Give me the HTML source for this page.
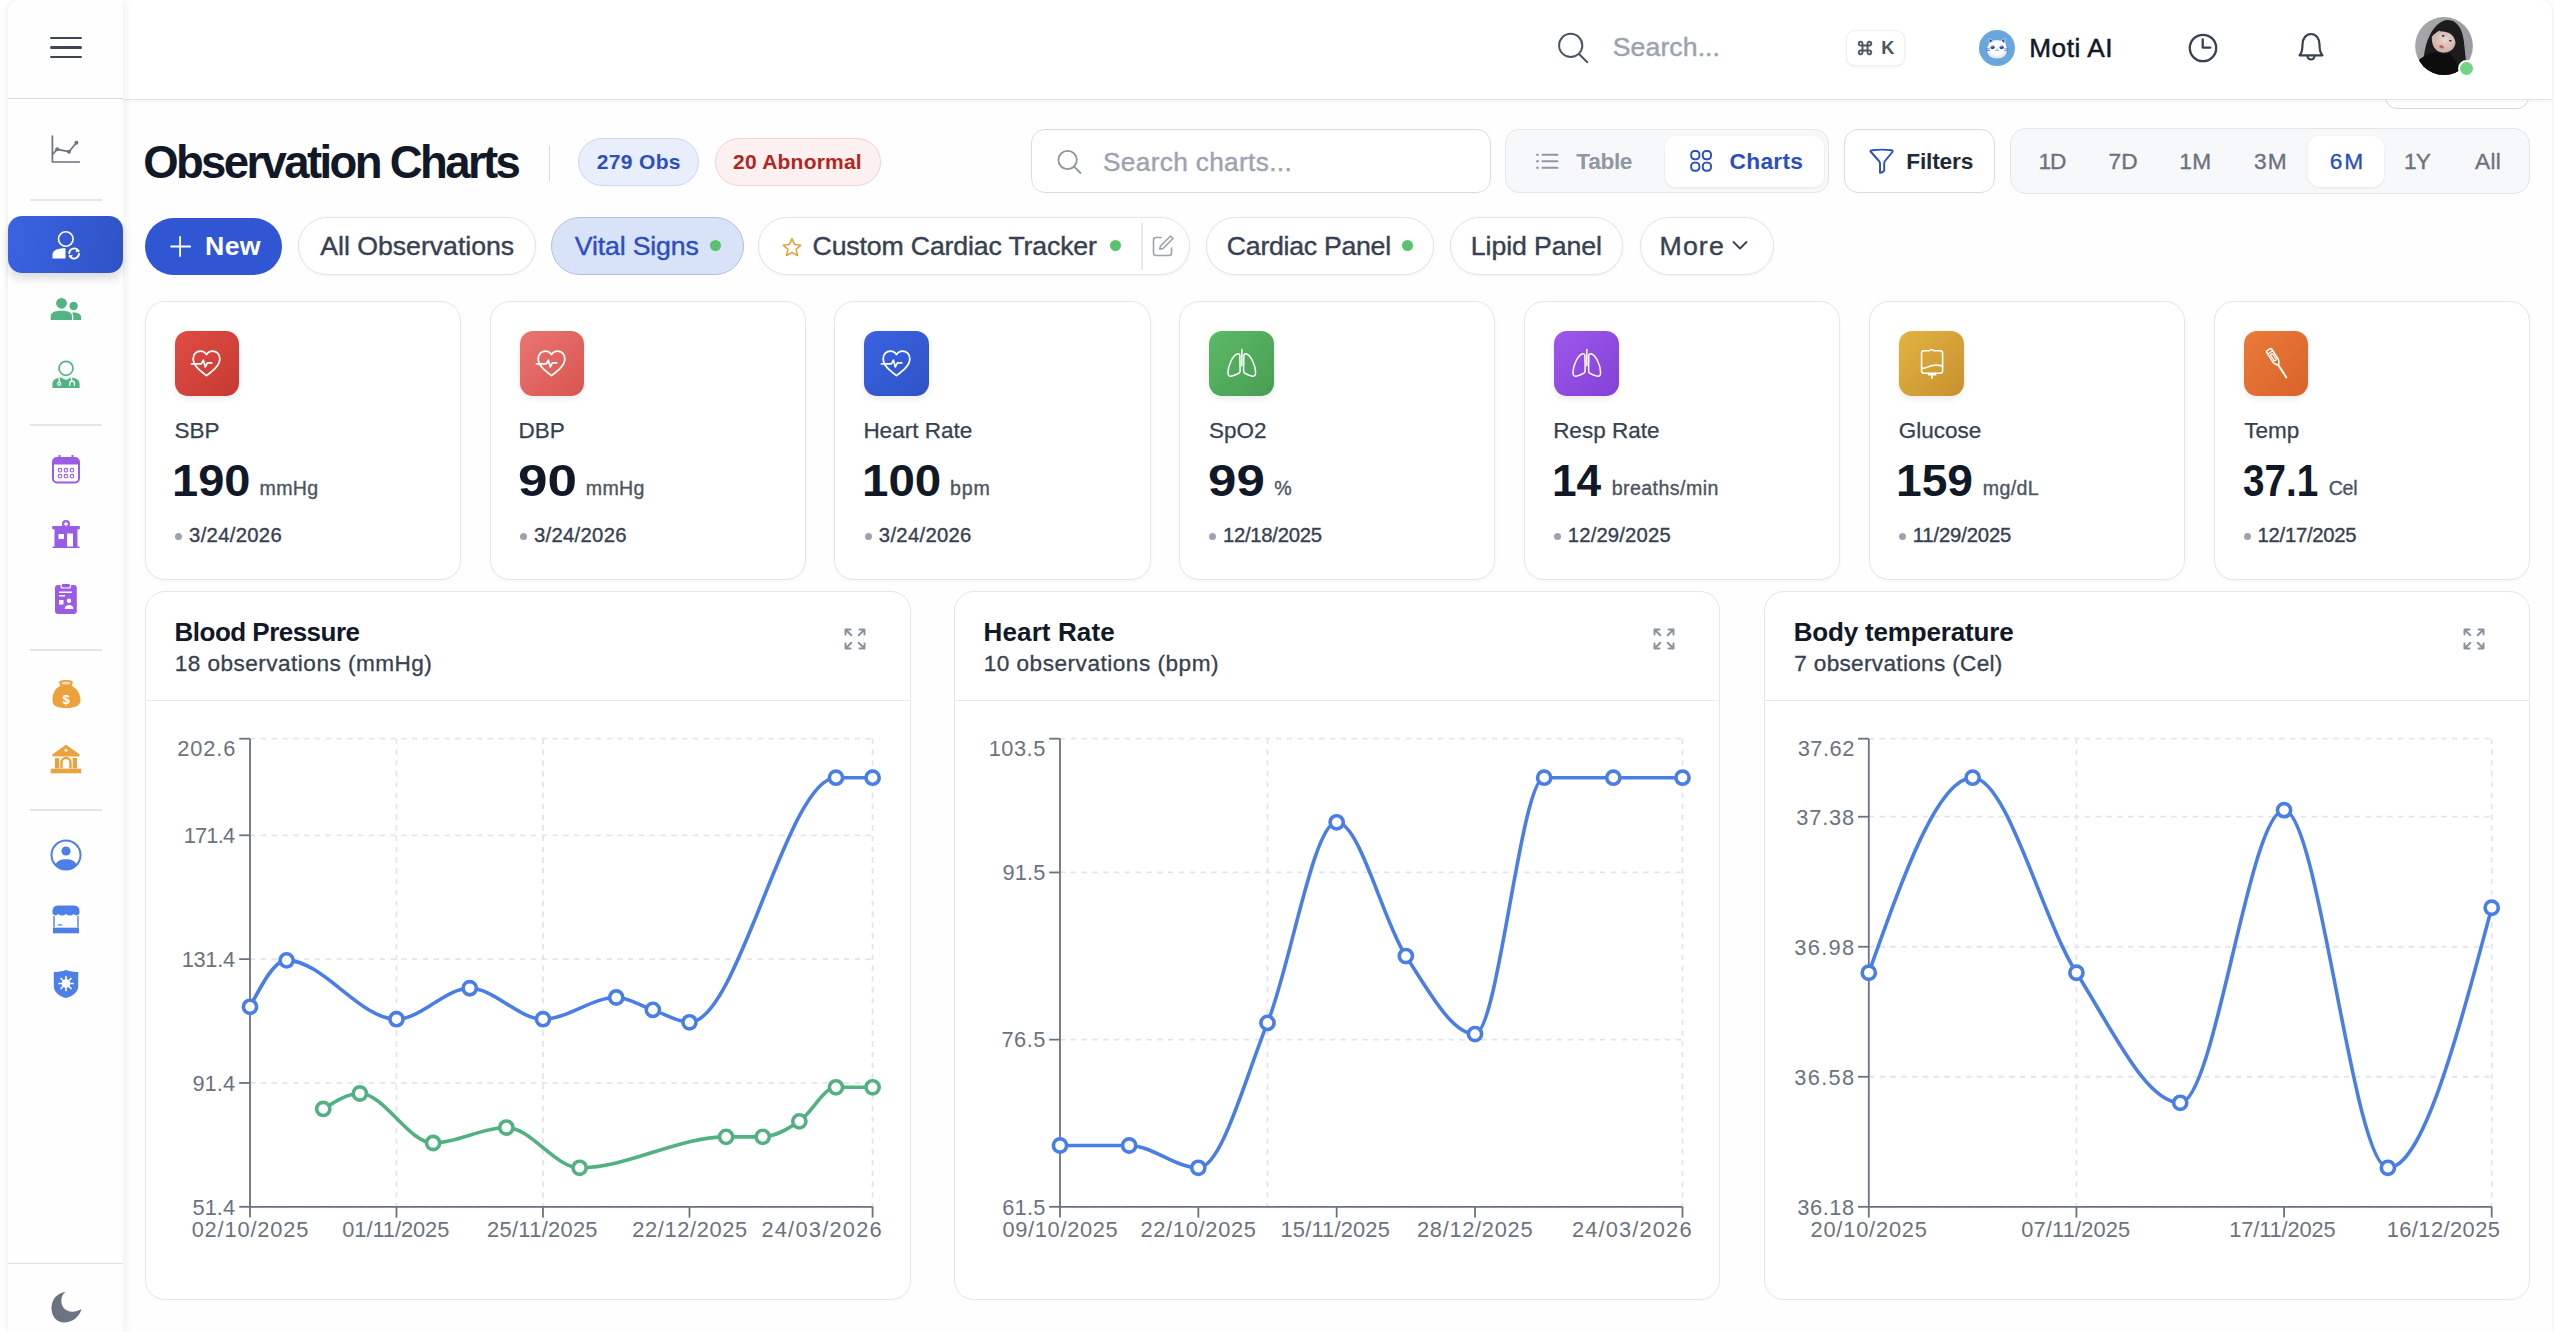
<!DOCTYPE html><html><head><meta charset="utf-8"><title>Observation Charts</title><style>
*{box-sizing:border-box;margin:0;padding:0}
html,body{width:2554px;height:1332px;overflow:hidden;background:#fff;font-family:"Liberation Sans",sans-serif;position:relative}
.abs{position:absolute}
.t{position:absolute;white-space:nowrap;line-height:1}
</style></head><body><div class="abs" style="left:8.00px;top:0.00px;width:2544.00px;height:1332.00px;background:#fefeff;border-radius:12px 12px 0 0;box-shadow:0 0 7px rgba(0,0,0,0.075)"></div><div class="abs" style="left:2385.00px;top:60.00px;width:144.00px;height:49.30px;background:#fff;border:1.5px solid #d3d6dc;border-radius:12px"></div><div class="abs" style="left:123.00px;top:0.00px;width:2429.00px;height:100.20px;background:#fff;border-bottom:1.2px solid #dfe2e7;border-radius:0 12px 0 0;box-shadow:0 2px 5px rgba(0,0,0,0.035)"></div><div class="abs" style="left:8.00px;top:0.00px;width:115.00px;height:1332.00px;background:#fefeff;border-radius:12px 0 0 0;box-shadow:3px 0 10px rgba(0,0,0,0.055)"></div><div class="abs" style="left:8.00px;top:97.90px;width:115.00px;height:1.20px;background:#d3d7de"></div><div class="abs" style="left:49.50px;top:36.60px;width:32.30px;height:2.80px;background:#3f4756;border-radius:1.5px"></div><div class="abs" style="left:49.50px;top:46.10px;width:32.30px;height:2.80px;background:#3f4756;border-radius:1.5px"></div><div class="abs" style="left:49.50px;top:55.60px;width:32.30px;height:2.80px;background:#3f4756;border-radius:1.5px"></div><div class="abs" style="left:30.00px;top:199.00px;width:72.00px;height:1.80px;background:#e3e5ea"></div><div class="abs" style="left:30.00px;top:424.00px;width:72.00px;height:1.80px;background:#e3e5ea"></div><div class="abs" style="left:30.00px;top:649.00px;width:72.00px;height:1.80px;background:#e3e5ea"></div><div class="abs" style="left:30.00px;top:809.00px;width:72.00px;height:1.80px;background:#e3e5ea"></div><div class="abs" style="left:8.00px;top:1262.50px;width:115.00px;height:1.80px;background:#dde0e6"></div><svg class="abs" style="left:48.00px;top:132.00px;" width="36.00" height="34.00" viewBox="0 0 36 34" fill="none"><path d="M4.4 4 V30 H31.3" stroke="#6b7280" stroke-width="1.7" stroke-linecap="round" stroke-linejoin="round"/><path d="M4.6 22.5 L9.2 17.3 L21 19.7 L28.4 10.8" stroke="#6b7280" stroke-width="1.7" stroke-linejoin="round"/><circle cx="9.2" cy="17.3" r="2" fill="#6b7280"/><circle cx="21" cy="19.7" r="2" fill="#6b7280"/><circle cx="28.4" cy="10.8" r="2" fill="#6b7280"/></svg><div class="abs" style="left:8.00px;top:216.00px;width:115.00px;height:56.50px;background:linear-gradient(100deg,#3a63e2,#2f53c6);border-radius:14px;box-shadow:0 6px 10px rgba(0,0,0,0.13)"></div><svg class="abs" style="left:48.00px;top:226.00px;" width="36.00" height="36.00" viewBox="0 0 36 36" fill="none"><circle cx="17.8" cy="13" r="7.3" stroke="#fff" stroke-width="1.6"/><path d="M4.5 32.5 V28.5 C4.5 25 8 22.3 17.5 22.3 V32.5 Z" fill="#fff"/><path d="M21.3 27.3 a5 5 0 0 1 9.3 -2.4 M30.9 27.7 a5 5 0 0 1 -9.3 2.4" stroke="#fff" stroke-width="1.9" stroke-linecap="round"/><path d="M28.6 22.6 l2.6 2.8 l-3.6 0.8 Z M23.6 32.4 l-2.6 -2.8 l3.6 -0.8 Z" fill="#fff"/></svg><svg class="abs" style="left:48.00px;top:294.00px;" width="36.00" height="30.00" viewBox="0 0 36 30" fill="none"><circle cx="25.6" cy="12" r="4.2" fill="#52b383"/><path d="M21 26 V21.5 C21 19.5 22.5 18.5 25.5 18.5 C30 18.5 33.2 20 33.2 23.5 V26 Z" fill="#52b383"/><path d="M1.5 26.8 V22.5 C1.5 18 5.5 15.5 13.5 15.5 C21.5 15.5 25.3 18 25.3 22.5 V26.8 Z" fill="#fff"/><circle cx="13.5" cy="9.3" r="6.6" fill="#fff"/><circle cx="13.5" cy="9.3" r="5.4" fill="#52b383"/><path d="M2.7 26 V22.5 C2.7 18.8 6 16.7 13.5 16.7 C21 16.7 24 18.8 24 22.5 V26 Z" fill="#52b383"/></svg><svg class="abs" style="left:48.00px;top:356.00px;" width="36.00" height="36.00" viewBox="0 0 36 36" fill="none"><circle cx="18" cy="12.3" r="7" stroke="#52b383" stroke-width="1.7"/><path d="M4.4 32 V28 C4.4 24.5 7 22 13 21.5 L18 24 L23 21.5 C29 22 31.6 24.5 31.6 28 V32 Z" fill="#52b383"/><path d="M11.2 22 V26.5" stroke="#fff" stroke-width="1.3"/><circle cx="11.2" cy="27.8" r="1.5" stroke="#fff" stroke-width="1.2"/><path d="M23.5 22 V24.5 M21.8 29.5 V27.3 a2.3 2.3 0 0 1 4.6 0 V29.5" stroke="#fff" stroke-width="1.3" stroke-linecap="round"/></svg><svg class="abs" style="left:48.00px;top:451.00px;" width="36.00" height="36.00" viewBox="0 0 36 36" fill="none"><rect x="5" y="7" width="26" height="24.5" rx="4" stroke="#9a5ce6" stroke-width="2"/><path d="M5 11 a4 4 0 0 1 4 -4 h18 a4 4 0 0 1 4 4 v2.5 h-26 Z" fill="#9a5ce6"/><path d="M11.5 4 v5 M24.5 4 v5" stroke="#9a5ce6" stroke-width="2"/><circle cx="12" cy="19.2" r="1.8" stroke="#9a5ce6" stroke-width="1.1"/><circle cx="12" cy="25.2" r="1.8" stroke="#9a5ce6" stroke-width="1.1"/><circle cx="18" cy="19.2" r="1.8" stroke="#9a5ce6" stroke-width="1.1"/><circle cx="18" cy="25.2" r="1.8" stroke="#9a5ce6" stroke-width="1.1"/><circle cx="24" cy="19.2" r="1.8" stroke="#9a5ce6" stroke-width="1.1"/><circle cx="24" cy="25.2" r="1.8" stroke="#9a5ce6" stroke-width="1.1"/></svg><svg class="abs" style="left:48.00px;top:516.00px;" width="36.00" height="36.00" viewBox="0 0 36 36" fill="none"><path d="M4.3 10 H31.8 V13.3 H29.5 V30.5 H31.5 V32 H4.5 V30.5 H6.5 V13.3 H4.3 Z" fill="#9a5ce6"/><circle cx="18" cy="8" r="4" fill="#9a5ce6"/><path d="M18 5.8 v4.4 M15.8 8 h4.4" stroke="#fff" stroke-width="1.3"/><rect x="10.5" y="18" width="5.5" height="5" fill="#fff"/><rect x="19" y="17.5" width="6" height="13" fill="#fff"/></svg><svg class="abs" style="left:48.00px;top:580.00px;" width="36.00" height="38.00" viewBox="0 0 36 38" fill="none"><rect x="7" y="5" width="21.8" height="29" rx="3" fill="#9a5ce6"/><rect x="13" y="3.5" width="9.5" height="4.5" rx="2" fill="#9a5ce6" stroke="#fff" stroke-width="1.2"/><path d="M11 12.3 h13 M11 15.8 h6" stroke="#fff" stroke-width="1.4"/><rect x="11" y="20" width="4.5" height="4.5" fill="#fff"/><circle cx="21" cy="20.7" r="2.2" fill="#fff"/><path d="M16.8 29 c0 -3 2 -4 4.3 -4 c2.3 0 4.3 1 4.3 4 Z" fill="#fff"/></svg><svg class="abs" style="left:48.00px;top:676.00px;" width="36.00" height="36.00" viewBox="0 0 36 36" fill="none"><path d="M12.5 9.5 C9 5 13 4 18 4 C23 4 27 5 23.5 9.5 C30 13 32.5 19 32.5 24 C32.5 30 27 32 18 32 C9 32 4.5 30 4.5 24 C4.5 19 6 13 12.5 9.5 Z" fill="#eba23c"/><ellipse cx="18" cy="7" rx="4.5" ry="1.6" fill="#fff" opacity="0.6"/><text x="18" y="27.5" text-anchor="middle" font-family="Liberation Sans" font-weight="700" font-size="13" fill="#fff">$</text></svg><svg class="abs" style="left:48.00px;top:741.00px;" width="36.00" height="36.00" viewBox="0 0 36 36" fill="none"><path d="M18 3.7 L31 13 H5 Z" fill="#eba23c"/><rect x="4.5" y="13" width="27" height="2.5" fill="#eba23c"/><rect x="7" y="17" width="4.3" height="10.5" fill="#eba23c"/><rect x="24.7" y="17" width="4.3" height="10.5" fill="#eba23c"/><path d="M13.5 27.5 V21.5 a4.5 4.5 0 0 1 9 0 V27.5" stroke="#eba23c" stroke-width="2.4"/><rect x="2.8" y="27.7" width="30.4" height="4.6" fill="#eba23c"/><path d="M18 7.5 v3.6 M16.2 9.3 h3.6" stroke="#fff" stroke-width="1.1"/></svg><svg class="abs" style="left:48.00px;top:836.00px;" width="36.00" height="36.00" viewBox="0 0 36 36" fill="none"><circle cx="18" cy="19" r="14.5" stroke="#4c7fe7" stroke-width="2"/><circle cx="18" cy="15" r="4.6" fill="#4c7fe7"/><path d="M7.5 28.5 C10 24.3 13 23.3 18 23.3 C23 23.3 26 24.3 28.5 28.5 C25.5 31.8 22 33.5 18 33.5 C14 33.5 10.5 31.8 7.5 28.5 Z" fill="#4c7fe7"/></svg><svg class="abs" style="left:48.00px;top:901.00px;" width="36.00" height="36.00" viewBox="0 0 36 36" fill="none"><path d="M4.5 10.5 Q4.5 4.5 10 4.5 H26 Q31.5 4.5 31.5 10.5 V12.5 Q29 16 25.7 13 Q22 16 18 13 Q14 16 10.3 13 Q7 16 4.5 12.5 Z" fill="#4c7fe7"/><path d="M6 15 V26.5 M30 15 V26.5" stroke="#4c7fe7" stroke-width="1.4"/><path d="M9 24.5 q3 -3 6 0 Z" fill="#4c7fe7"/><rect x="5" y="26.7" width="26" height="5.6" fill="#4c7fe7"/></svg><svg class="abs" style="left:48.00px;top:966.00px;" width="36.00" height="36.00" viewBox="0 0 36 36" fill="none"><path d="M18 4 C22 5.5 26 6 30.2 6 V20 C30.2 26 25 30 18 32 C11 30 5.8 26 5.8 20 V6 C10 6 14 5.5 18 4 Z" fill="#4c7fe7"/><circle cx="18" cy="17.5" r="4.3" fill="#fff"/><path d="M18 10.5 v14 M11 17.5 h14 M13 12.5 l10 10 M23 12.5 l-10 10" stroke="#fff" stroke-width="1.7" stroke-linecap="round"/></svg><svg class="abs" style="left:48.00px;top:1288.00px;" width="36.00" height="38.00" viewBox="0 0 36 38" fill="none"><path d="M17.5 4 C11 9 12.5 19.5 19 22.5 C24 25 29 23.5 33.6 21 C31 30 23 35 15 34.5 C6.5 33.5 3.5 26 3.5 20 C3.5 11 10 4.5 17.5 4 Z" fill="#6b7280"/></svg><svg class="abs" style="left:1552.00px;top:28.00px;" width="40.00" height="40.00" viewBox="0 0 40 40" fill="none"><circle cx="18.7" cy="17.4" r="11.6" stroke="#4b5563" stroke-width="2"/><path d="M27 26 L35.3 34.2" stroke="#4b5563" stroke-width="2" stroke-linecap="round"/></svg><div class="t" style="left:1612.79px;top:34.48px;font-size:26.60px;color:#9ca3af;letter-spacing:0.098px;-webkit-text-stroke:0.45px #9ca3af;">Search...</div><div class="abs" style="left:1846.00px;top:29.60px;width:59.00px;height:36.40px;background:#fff;border:1px solid #eef0f3;border-radius:9px;box-shadow:0 1px 3px rgba(0,0,0,0.06)"></div><svg class="abs" style="left:1857.00px;top:40.00px;" width="16.00" height="16.00" viewBox="0 0 16 16" fill="none"><path d="M5.5 5.5 H10.5 V10.5 H5.5 Z M5.5 5.5 V3.8 A1.9 1.9 0 1 0 3.8 5.5 H5.5 M10.5 5.5 H12.2 A1.9 1.9 0 1 0 10.5 3.8 V5.5 M10.5 10.5 V12.2 A1.9 1.9 0 1 0 12.2 10.5 H10.5 M5.5 10.5 H3.8 A1.9 1.9 0 1 0 5.5 12.2 V10.5" stroke="#4b5563" stroke-width="1.9"/></svg><div class="t" style="left:1881.28px;top:38.51px;font-size:18.30px;color:#4b5563;font-weight:700;">K</div><svg class="abs" style="left:1979.00px;top:30.00px;" width="36.00" height="36.00" viewBox="0 0 36 36" fill="none"><defs><radialGradient id="cath" cx="0.5" cy="0.4" r="0.6"><stop offset="0.6" stop-color="#fff"/><stop offset="1" stop-color="#d5e2f3"/></radialGradient></defs><circle cx="18" cy="18" r="18" fill="#68a7de"/><path d="M9.5 14 L9.2 7.2 L14.5 10.3 Q18 9.3 21.5 10.3 L26.9 7.2 L26.8 14 Q28.5 17 28.3 21 Q27.5 28.9 18 28.9 Q8.5 28.9 7.7 21 Q7.5 17 9.5 14 Z" fill="url(#cath)" stroke="#4f86c9" stroke-width="0.5"/><path d="M10.3 8.8 L10.6 13 L13.6 10.8 Z M25.7 8.8 L25.4 13 L22.4 10.8 Z" fill="#2d4aa8"/><ellipse cx="13.6" cy="17.3" rx="2.1" ry="1.9" fill="#2d4aa8"/><ellipse cx="22.6" cy="17.3" rx="2.1" ry="1.9" fill="#2d4aa8"/><circle cx="13" cy="16.6" r="0.6" fill="#fff"/><circle cx="22" cy="16.6" r="0.6" fill="#fff"/><path d="M17.2 18.6 h1.6 l-0.8 0.9 Z" fill="#6d86c6"/><path d="M16.3 20.3 h3.4 M6.8 18.8 h4.2 M7.2 20.5 h4 M25 18.8 h4.2 M24.8 20.5 h4" stroke="#3d5bb3" stroke-width="0.6"/><circle cx="13.5" cy="11.5" r="0.5" fill="#8aa3d8"/></svg><div class="t" style="left:2029.15px;top:34.82px;font-size:26.20px;color:#111827;letter-spacing:0.556px;-webkit-text-stroke:0.5px #111827;">Moti AI</div><svg class="abs" style="left:2186.00px;top:31.00px;" width="34.00" height="34.00" viewBox="0 0 34 34" fill="none"><circle cx="17" cy="17" r="13.2" stroke="#374151" stroke-width="2.3"/><path d="M16.7 8.3 V16.6 H24.3" stroke="#374151" stroke-width="2.3" stroke-linecap="round" stroke-linejoin="round"/></svg><svg class="abs" style="left:2293.00px;top:30.00px;" width="36.00" height="36.00" viewBox="0 0 36 36" fill="none"><path d="M6.5 25.3 C9 23 9.5 20.5 9.5 14.5 C9.5 8.5 13 4 18 4 C23 4 26.5 8.5 26.5 14.5 C26.5 20.5 27 23 29.5 25.3 Z" stroke="#374151" stroke-width="2.2" stroke-linejoin="round"/><path d="M14.5 26 a3.5 3.5 0 0 0 7 0" stroke="#374151" stroke-width="2.2"/></svg><svg class="abs" style="left:2415.00px;top:17.00px;" width="58.00" height="58.00" viewBox="0 0 58 58" fill="none"><defs><clipPath id="av"><circle cx="29" cy="29" r="28.9"/></clipPath><linearGradient id="avbg" x1="0" y1="0" x2="1" y2="0.4"><stop offset="0" stop-color="#a9a9ab"/><stop offset="1" stop-color="#989aa0"/></linearGradient><radialGradient id="avf" cx="0.55" cy="0.45" r="0.6"><stop offset="0" stop-color="#e8d6cf"/><stop offset="1" stop-color="#c9ada3"/></radialGradient></defs><g clip-path="url(#av)"><rect width="58" height="58" fill="url(#avbg)"/><path d="M7 58 C8 42 10 28 14 20 C18 10 26 3 33 3 C42 3 47 12 48.5 22 C50 32 50.5 44 53 58 Z" fill="#1d1b1c"/><path d="M17 19.5 C22 13.5 28 12 32 13 C38 14.5 41 19.5 40.5 25.5 C40 31 36 35 30 35.6 C25 36 20.5 33.5 18.3 29 C17 25.5 16.5 22 17 19.5 Z" fill="url(#avf)"/><path d="M25 12.5 C33 9.5 41 14 43 23 L40.6 25 C39 17.5 33.5 14.2 25 14.2 Z" fill="#1d1b1c"/><path d="M0 58 L0 47 C5 41 12 37 19.5 34.8 C25 36.5 30 37.5 34.5 36.5 C39 41 44 49 47 58 Z" fill="#0e0d0e"/><ellipse cx="28.2" cy="18.9" rx="1.4" ry="0.8" fill="#2a2222"/><ellipse cx="35.3" cy="23.7" rx="1.4" ry="0.8" fill="#2a2222"/><ellipse cx="26.6" cy="29.8" rx="2.5" ry="1.5" transform="rotate(20 26.6 29.8)" fill="#c4605a"/></g></svg><div class="abs" style="left:2458.40px;top:60.40px;width:17.00px;height:17.00px;background:#72d382;border:2.6px solid #fff;border-radius:50%"></div><div class="t" style="left:143.13px;top:139.88px;font-size:45.50px;color:#111827;font-weight:700;letter-spacing:-2.619px;">Observation Charts</div><div class="abs" style="left:548.50px;top:144.50px;width:1.20px;height:36.00px;background:#d8dbe0"></div><div class="abs" style="left:578.00px;top:138.00px;width:121.00px;height:47.60px;background:#e8eefb;border:1.2px solid #cbd7f4;border-radius:24px"></div><div class="t" style="left:596.87px;top:151.42px;font-size:21.00px;color:#2b4fc1;font-weight:700;letter-spacing:0.313px;">279 Obs</div><div class="abs" style="left:714.50px;top:138.00px;width:166.50px;height:47.60px;background:#fcf0f0;border:1.2px solid #f4d2d0;border-radius:24px"></div><div class="t" style="left:733.07px;top:151.42px;font-size:21.00px;color:#b3261e;font-weight:700;letter-spacing:0.222px;">20 Abnormal</div><div class="abs" style="left:1030.50px;top:129.30px;width:460.00px;height:64.00px;background:#fff;border:1.5px solid #d9dce1;border-radius:14px"></div><svg class="abs" style="left:1054.00px;top:146.00px;" width="30.00" height="30.00" viewBox="0 0 30 30" fill="none"><circle cx="13.6" cy="14" r="9.2" stroke="#8d94a0" stroke-width="1.8"/><path d="M20.3 20.8 L26.5 27" stroke="#8d94a0" stroke-width="1.8" stroke-linecap="round"/></svg><div class="t" style="left:1103.01px;top:148.82px;font-size:26.20px;color:#9ca3af;letter-spacing:0.354px;-webkit-text-stroke:0.4px #9ca3af;">Search charts...</div><div class="abs" style="left:1505.00px;top:129.30px;width:324.00px;height:64.00px;background:#f7f8fa;border:1.5px solid #e3e5e9;border-radius:14px"></div><div class="abs" style="left:1665.00px;top:136.30px;width:159.00px;height:50.50px;background:#fff;border-radius:11px;box-shadow:0 1px 3px rgba(0,0,0,0.08)"></div><svg class="abs" style="left:1532.00px;top:148.00px;" width="30.00" height="28.00" viewBox="0 0 30 28" fill="none"><path d="M10.5 6.8 H25.5 M10.5 13.3 H25.5 M10.5 19.8 H25.5" stroke="#9097a3" stroke-width="1.9" stroke-linecap="round"/><circle cx="5.5" cy="6.8" r="1.3" fill="#9097a3"/><circle cx="5.5" cy="13.3" r="1.3" fill="#9097a3"/><circle cx="5.5" cy="19.8" r="1.3" fill="#9097a3"/></svg><div class="t" style="left:1576.35px;top:149.58px;font-size:22.70px;color:#9097a3;font-weight:700;letter-spacing:-0.364px;">Table</div><svg class="abs" style="left:1688.00px;top:148.00px;" width="28.00" height="28.00" viewBox="0 0 28 28" fill="none"><rect x="3.2" y="3" width="8.2" height="8.2" rx="3.3" stroke="#2b4fc1" stroke-width="1.9"/><rect x="14.8" y="3" width="8.2" height="8.2" rx="3.3" stroke="#2b4fc1" stroke-width="1.9"/><rect x="3.2" y="14.6" width="8.2" height="8.2" rx="3.3" stroke="#2b4fc1" stroke-width="1.9"/><rect x="14.8" y="14.6" width="8.2" height="8.2" rx="3.3" stroke="#2b4fc1" stroke-width="1.9"/></svg><div class="t" style="left:1729.57px;top:149.58px;font-size:22.70px;color:#2b4fc1;font-weight:700;letter-spacing:0.292px;">Charts</div><div class="abs" style="left:1844.00px;top:129.30px;width:151.00px;height:64.00px;background:#fff;border:1.5px solid #d9dce1;border-radius:14px"></div><svg class="abs" style="left:1866.00px;top:146.00px;" width="30.00" height="30.00" viewBox="0 0 30 30" fill="none"><path d="M5 6 C4 5 4.5 4.2 6 4.2 C12 3.5 20 3.5 25.5 4.2 C27 4.4 27 5.3 26 6.5 L19 15 C18.4 15.7 18.2 16.5 18.2 17.5 V24 C18.2 25 17.5 25.8 15.5 26.5 L14 26.8 V17.5 C14 16.5 13.6 15.8 13 15 Z" stroke="#2b4fc1" stroke-width="1.9" stroke-linejoin="round"/></svg><div class="t" style="left:1906.18px;top:149.58px;font-size:22.70px;color:#1f2937;font-weight:700;letter-spacing:-0.145px;">Filters</div><div class="abs" style="left:2010.00px;top:128.40px;width:520.00px;height:66.00px;background:#f7f8fa;border:1.5px solid #e3e5e9;border-radius:16px"></div><div class="abs" style="left:2308.00px;top:136.00px;width:75.50px;height:50.60px;background:#fff;border-radius:12px;box-shadow:0 1px 3px rgba(0,0,0,0.08)"></div><div class="t" style="left:2038.51px;top:149.58px;font-size:22.70px;color:#6b7280;letter-spacing:-1.082px;-webkit-text-stroke:0.35px #6b7280;">1D</div><div class="t" style="left:2108.42px;top:149.58px;font-size:22.70px;color:#6b7280;letter-spacing:0.259px;-webkit-text-stroke:0.35px #6b7280;">7D</div><div class="t" style="left:2179.34px;top:149.58px;font-size:22.70px;color:#6b7280;letter-spacing:0.214px;-webkit-text-stroke:0.35px #6b7280;">1M</div><div class="t" style="left:2253.93px;top:149.58px;font-size:22.70px;color:#6b7280;letter-spacing:1.196px;-webkit-text-stroke:0.35px #6b7280;">3M</div><div class="t" style="left:2329.82px;top:149.58px;font-size:22.70px;color:#2b4fc1;letter-spacing:1.729px;-webkit-text-stroke:0.35px #2b4fc1;">6M</div><div class="t" style="left:2403.96px;top:149.58px;font-size:22.70px;color:#6b7280;letter-spacing:-0.922px;-webkit-text-stroke:0.35px #6b7280;">1Y</div><div class="t" style="left:2475.10px;top:149.58px;font-size:22.70px;color:#6b7280;letter-spacing:0.221px;-webkit-text-stroke:0.35px #6b7280;">All</div><div class="abs" style="left:145.00px;top:218.00px;width:137.00px;height:57.00px;background:#3056d3;border-radius:29px"></div><svg class="abs" style="left:168.00px;top:234.00px;" width="24.00" height="24.00" viewBox="0 0 24 24" fill="none"><path d="M12.1 2.9 V22 M3 12.5 H22.2" stroke="#fff" stroke-width="1.8" stroke-linecap="round"/></svg><div class="t" style="left:205.01px;top:232.80px;font-size:26.70px;color:#fff;font-weight:700;letter-spacing:0.367px;">New</div><div class="abs" style="left:297.70px;top:217.40px;width:238.30px;height:58.00px;background:#fff;border:1.5px solid #e2e4e8;border-radius:29px;box-shadow:0 1px 3px rgba(0,0,0,0.05)"></div><div class="t" style="left:320.25px;top:232.80px;font-size:26.70px;color:#374151;letter-spacing:-0.025px;-webkit-text-stroke:0.4px #374151;">All Observations</div><div class="abs" style="left:551.00px;top:217.40px;width:192.60px;height:58.00px;background:#d9e3f8;border:1.5px solid #a9c0f0;border-radius:29px;"></div><div class="t" style="left:574.78px;top:232.80px;font-size:26.70px;color:#2b4fc1;letter-spacing:-0.156px;-webkit-text-stroke:0.4px #2b4fc1;">Vital Signs</div><div class="abs" style="left:710.20px;top:240.40px;width:11.00px;height:11.00px;background:#5cc16e;border-radius:50%"></div><div class="abs" style="left:758.00px;top:217.40px;width:432.00px;height:58.00px;background:#fff;border:1.5px solid #e2e4e8;border-radius:29px;box-shadow:0 1px 3px rgba(0,0,0,0.05)"></div><svg class="abs" style="left:780.00px;top:235.50px;" width="24.00" height="24.00" viewBox="0 0 24 24" fill="none"><path d="M12 2.6 L14.6 8.5 L20.8 9.1 L16.1 13.3 L17.5 19.6 L12 16.3 L6.5 19.6 L7.9 13.3 L3.2 9.1 L9.4 8.5 Z" stroke="#e79a2a" stroke-width="1.45" stroke-linejoin="round"/></svg><div class="t" style="left:812.54px;top:232.80px;font-size:26.70px;color:#374151;letter-spacing:-0.158px;-webkit-text-stroke:0.4px #374151;">Custom Cardiac Tracker</div><div class="abs" style="left:1109.50px;top:240.40px;width:11.00px;height:11.00px;background:#5cc16e;border-radius:50%"></div><div class="abs" style="left:1141.30px;top:223.00px;width:1.50px;height:46.60px;background:#e5e7eb"></div><svg class="abs" style="left:1150.00px;top:233.00px;" width="26.00" height="26.00" viewBox="0 0 26 26" fill="none"><path d="M11 4.5 H6 Q3.5 4.5 3.5 7 V20 Q3.5 22.5 6 22.5 H19 Q21.5 22.5 21.5 20 V15" stroke="#9ca3af" stroke-width="1.6" stroke-linecap="round"/><path d="M20.5 3 L23 5.5 L13 15.5 L9.8 16.2 L10.5 13 Z" stroke="#9ca3af" stroke-width="1.6" stroke-linejoin="round"/></svg><div class="abs" style="left:1205.50px;top:217.40px;width:228.50px;height:58.00px;background:#fff;border:1.5px solid #e2e4e8;border-radius:29px;box-shadow:0 1px 3px rgba(0,0,0,0.05)"></div><div class="t" style="left:1226.84px;top:232.80px;font-size:26.70px;color:#374151;letter-spacing:-0.281px;-webkit-text-stroke:0.4px #374151;">Cardiac Panel</div><div class="abs" style="left:1401.60px;top:240.40px;width:11.00px;height:11.00px;background:#5cc16e;border-radius:50%"></div><div class="abs" style="left:1449.60px;top:217.40px;width:173.40px;height:58.00px;background:#fff;border:1.5px solid #e2e4e8;border-radius:29px;box-shadow:0 1px 3px rgba(0,0,0,0.05)"></div><div class="t" style="left:1470.81px;top:232.80px;font-size:26.70px;color:#374151;letter-spacing:-0.084px;-webkit-text-stroke:0.4px #374151;">Lipid Panel</div><div class="abs" style="left:1639.50px;top:217.40px;width:134.00px;height:58.00px;background:#fff;border:1.5px solid #e2e4e8;border-radius:29px;box-shadow:0 1px 3px rgba(0,0,0,0.05)"></div><div class="t" style="left:1659.51px;top:232.80px;font-size:26.70px;color:#374151;letter-spacing:1.148px;-webkit-text-stroke:0.4px #374151;">More</div><svg class="abs" style="left:1731.00px;top:238.00px;" width="18.00" height="14.00" viewBox="0 0 18 14" fill="none"><path d="M2.5 4 L9 10.5 L15.5 4" stroke="#374151" stroke-width="1.8" stroke-linecap="round" stroke-linejoin="round"/></svg><div class="abs" style="left:144.65px;top:301.40px;width:316.20px;height:278.60px;background:#fff;border:1.5px solid #e4e6ea;border-radius:20px;box-shadow:0 1px 4px rgba(0,0,0,0.03)"></div><div class="abs" style="left:174.65px;top:331.00px;width:64.50px;height:64.80px;background:linear-gradient(135deg,#e04c43,#c53a33);border-radius:13px;box-shadow:0 3px 6px rgba(0,0,0,0.08)"></div><svg class="abs" style="left:188.40px;top:344.90px;" width="37.00" height="37.00" viewBox="0 0 32 32" fill="none"><path d="M16 26.5 C10 22 4.5 17.5 4.5 11.8 C4.5 8 7.3 5.2 10.8 5.2 C13.2 5.2 15 6.6 16 8.3 C17 6.6 18.8 5.2 21.2 5.2 C24.7 5.2 27.5 8 27.5 11.8 C27.5 17.5 22 22 16 26.5 Z" stroke="#fff" stroke-width="1.5" stroke-linejoin="round"/><path d="M3 16.3 H11.5 L13.3 13.2 L15 19 L16.8 15.5 H20.5" stroke="#fff" stroke-width="1.5" stroke-linejoin="round" stroke-linecap="round"/><path d="M5.2 16.3 v0" stroke="#fff"/></svg><div class="t" style="left:174.48px;top:420.05px;font-size:22.50px;color:#374151;-webkit-text-stroke:0.25px #374151;">SBP</div><div class="t" style="left:171.99px;top:457.50px;font-size:45.00px;color:#111827;font-weight:700;transform:scaleX(1.0454);transform-origin:0 0;">190</div><div class="t" style="left:259.55px;top:479.01px;font-size:19.60px;color:#4b5563;letter-spacing:0.285px;-webkit-text-stroke:0.35px #4b5563;">mmHg</div><div class="abs" style="left:174.85px;top:532.60px;width:7.00px;height:7.00px;background:#9ca3af;border-radius:50%"></div><div class="t" style="left:189.08px;top:525.41px;font-size:20.30px;color:#374151;letter-spacing:0.295px;-webkit-text-stroke:0.35px #374151;">3/24/2026</div><div class="abs" style="left:489.52px;top:301.40px;width:316.20px;height:278.60px;background:#fff;border:1.5px solid #e4e6ea;border-radius:20px;box-shadow:0 1px 4px rgba(0,0,0,0.03)"></div><div class="abs" style="left:519.52px;top:331.00px;width:64.50px;height:64.80px;background:linear-gradient(135deg,#e97673,#d9544f);border-radius:13px;box-shadow:0 3px 6px rgba(0,0,0,0.08)"></div><svg class="abs" style="left:533.27px;top:344.90px;" width="37.00" height="37.00" viewBox="0 0 32 32" fill="none"><path d="M16 26.5 C10 22 4.5 17.5 4.5 11.8 C4.5 8 7.3 5.2 10.8 5.2 C13.2 5.2 15 6.6 16 8.3 C17 6.6 18.8 5.2 21.2 5.2 C24.7 5.2 27.5 8 27.5 11.8 C27.5 17.5 22 22 16 26.5 Z" stroke="#fff" stroke-width="1.5" stroke-linejoin="round"/><path d="M3 16.3 H11.5 L13.3 13.2 L15 19 L16.8 15.5 H20.5" stroke="#fff" stroke-width="1.5" stroke-linejoin="round" stroke-linecap="round"/><path d="M5.2 16.3 v0" stroke="#fff"/></svg><div class="t" style="left:518.52px;top:420.05px;font-size:22.50px;color:#374151;-webkit-text-stroke:0.25px #374151;">DBP</div><div class="t" style="left:517.98px;top:457.50px;font-size:45.00px;color:#111827;font-weight:700;transform:scaleX(1.1790);transform-origin:0 0;">90</div><div class="t" style="left:585.82px;top:479.01px;font-size:19.60px;color:#4b5563;letter-spacing:0.285px;-webkit-text-stroke:0.35px #4b5563;">mmHg</div><div class="abs" style="left:519.72px;top:532.60px;width:7.00px;height:7.00px;background:#9ca3af;border-radius:50%"></div><div class="t" style="left:533.95px;top:525.41px;font-size:20.30px;color:#374151;letter-spacing:0.295px;-webkit-text-stroke:0.35px #374151;">3/24/2026</div><div class="abs" style="left:834.39px;top:301.40px;width:316.20px;height:278.60px;background:#fff;border:1.5px solid #e4e6ea;border-radius:20px;box-shadow:0 1px 4px rgba(0,0,0,0.03)"></div><div class="abs" style="left:864.39px;top:331.00px;width:64.50px;height:64.80px;background:linear-gradient(135deg,#3b63e3,#2e53c6);border-radius:13px;box-shadow:0 3px 6px rgba(0,0,0,0.08)"></div><svg class="abs" style="left:878.14px;top:344.90px;" width="37.00" height="37.00" viewBox="0 0 32 32" fill="none"><path d="M16 26.5 C10 22 4.5 17.5 4.5 11.8 C4.5 8 7.3 5.2 10.8 5.2 C13.2 5.2 15 6.6 16 8.3 C17 6.6 18.8 5.2 21.2 5.2 C24.7 5.2 27.5 8 27.5 11.8 C27.5 17.5 22 22 16 26.5 Z" stroke="#fff" stroke-width="1.5" stroke-linejoin="round"/><path d="M3 16.3 H11.5 L13.3 13.2 L15 19 L16.8 15.5 H20.5" stroke="#fff" stroke-width="1.5" stroke-linejoin="round" stroke-linecap="round"/><path d="M5.2 16.3 v0" stroke="#fff"/></svg><div class="t" style="left:863.39px;top:420.05px;font-size:22.50px;color:#374151;-webkit-text-stroke:0.25px #374151;">Heart Rate</div><div class="t" style="left:861.70px;top:457.50px;font-size:45.00px;color:#111827;font-weight:700;transform:scaleX(1.0554);transform-origin:0 0;">100</div><div class="t" style="left:950.03px;top:479.01px;font-size:19.60px;color:#4b5563;letter-spacing:0.864px;-webkit-text-stroke:0.35px #4b5563;">bpm</div><div class="abs" style="left:864.59px;top:532.60px;width:7.00px;height:7.00px;background:#9ca3af;border-radius:50%"></div><div class="t" style="left:878.82px;top:525.41px;font-size:20.30px;color:#374151;letter-spacing:0.295px;-webkit-text-stroke:0.35px #374151;">3/24/2026</div><div class="abs" style="left:1179.26px;top:301.40px;width:316.20px;height:278.60px;background:#fff;border:1.5px solid #e4e6ea;border-radius:20px;box-shadow:0 1px 4px rgba(0,0,0,0.03)"></div><div class="abs" style="left:1209.26px;top:331.00px;width:64.50px;height:64.80px;background:linear-gradient(135deg,#5cba66,#489d54);border-radius:13px;box-shadow:0 3px 6px rgba(0,0,0,0.08)"></div><svg class="abs" style="left:1223.01px;top:344.90px;" width="37.00" height="37.00" viewBox="0 0 32 32" fill="none"><path d="M16.3 3.9 V18" stroke="#fff" stroke-width="1.3" stroke-linecap="round"/><path d="M14.6 9.5 C14.6 7.8 13.8 7.3 12.6 7.6 C8.3 9 4.3 18 4.3 23.8 C4.3 26.6 5.6 27.4 7.6 26.9 C10 26.2 12.3 25.2 13.8 24.3 C14.5 23.8 14.8 23.2 14.8 22.2 Z" stroke="#fff" stroke-width="1.3" stroke-linejoin="round"/><path d="M18 9.5 C18 7.8 18.8 7.3 20 7.6 C24.3 9 28.2 18 28.2 23.8 C28.2 26.6 26.9 27.4 24.9 26.9 C22.5 26.2 20.2 25.2 18.7 24.3 C18 23.8 17.8 23.2 17.8 22.2 Z" stroke="#fff" stroke-width="1.3" stroke-linejoin="round"/></svg><div class="t" style="left:1209.09px;top:420.05px;font-size:22.50px;color:#374151;-webkit-text-stroke:0.25px #374151;">SpO2</div><div class="t" style="left:1207.79px;top:457.50px;font-size:45.00px;color:#111827;font-weight:700;transform:scaleX(1.1340);transform-origin:0 0;">99</div><div class="t" style="left:1274.26px;top:479.01px;font-size:19.60px;color:#4b5563;-webkit-text-stroke:0.35px #4b5563;">%</div><div class="abs" style="left:1209.46px;top:532.60px;width:7.00px;height:7.00px;background:#9ca3af;border-radius:50%"></div><div class="t" style="left:1222.91px;top:525.41px;font-size:20.30px;color:#374151;letter-spacing:-0.267px;-webkit-text-stroke:0.35px #374151;">12/18/2025</div><div class="abs" style="left:1524.13px;top:301.40px;width:316.20px;height:278.60px;background:#fff;border:1.5px solid #e4e6ea;border-radius:20px;box-shadow:0 1px 4px rgba(0,0,0,0.03)"></div><div class="abs" style="left:1554.13px;top:331.00px;width:64.50px;height:64.80px;background:linear-gradient(135deg,#9c57ea,#8540d8);border-radius:13px;box-shadow:0 3px 6px rgba(0,0,0,0.08)"></div><svg class="abs" style="left:1567.88px;top:344.90px;" width="37.00" height="37.00" viewBox="0 0 32 32" fill="none"><path d="M16.3 3.9 V18" stroke="#fff" stroke-width="1.3" stroke-linecap="round"/><path d="M14.6 9.5 C14.6 7.8 13.8 7.3 12.6 7.6 C8.3 9 4.3 18 4.3 23.8 C4.3 26.6 5.6 27.4 7.6 26.9 C10 26.2 12.3 25.2 13.8 24.3 C14.5 23.8 14.8 23.2 14.8 22.2 Z" stroke="#fff" stroke-width="1.3" stroke-linejoin="round"/><path d="M18 9.5 C18 7.8 18.8 7.3 20 7.6 C24.3 9 28.2 18 28.2 23.8 C28.2 26.6 26.9 27.4 24.9 26.9 C22.5 26.2 20.2 25.2 18.7 24.3 C18 23.8 17.8 23.2 17.8 22.2 Z" stroke="#fff" stroke-width="1.3" stroke-linejoin="round"/></svg><div class="t" style="left:1553.13px;top:420.05px;font-size:22.50px;color:#374151;-webkit-text-stroke:0.25px #374151;">Resp Rate</div><div class="t" style="left:1551.64px;top:457.50px;font-size:45.00px;color:#111827;font-weight:700;transform:scaleX(0.9834);transform-origin:0 0;">14</div><div class="t" style="left:1611.67px;top:479.01px;font-size:19.60px;color:#4b5563;letter-spacing:0.433px;-webkit-text-stroke:0.35px #4b5563;">breaths/min</div><div class="abs" style="left:1554.33px;top:532.60px;width:7.00px;height:7.00px;background:#9ca3af;border-radius:50%"></div><div class="t" style="left:1567.78px;top:525.41px;font-size:20.30px;color:#374151;letter-spacing:0.156px;-webkit-text-stroke:0.35px #374151;">12/29/2025</div><div class="abs" style="left:1869.00px;top:301.40px;width:316.20px;height:278.60px;background:#fff;border:1.5px solid #e4e6ea;border-radius:20px;box-shadow:0 1px 4px rgba(0,0,0,0.03)"></div><div class="abs" style="left:1899.00px;top:331.00px;width:64.50px;height:64.80px;background:linear-gradient(135deg,#e2b441,#c8902f);border-radius:13px;box-shadow:0 3px 6px rgba(0,0,0,0.08)"></div><svg class="abs" style="left:1912.75px;top:344.90px;" width="37.00" height="37.00" viewBox="0 0 32 32" fill="none"><path d="M9.3 5 H14 Q16 2.8 18 5 H23.4 Q25.6 5 25.6 7.2 V22.3 Q25.6 24.5 23.4 24.5 H9.6 Q7.4 24.5 7.4 22.3 V7.2 Q7.4 5 9.3 5 Z" stroke="#fff" stroke-width="1.35" stroke-linejoin="round"/><path d="M7.4 20 C11 21 13 17.8 18.5 17.5 C22.5 17.2 25.6 17.5 25.6 19.5" stroke="#fff" stroke-width="1.35"/><path d="M13.5 24.5 V25.8 H19.5 V24.5 M16.5 25.8 V28.8" stroke="#fff" stroke-width="1.35" stroke-linecap="round"/></svg><div class="t" style="left:1898.72px;top:420.05px;font-size:22.50px;color:#374151;-webkit-text-stroke:0.25px #374151;">Glucose</div><div class="t" style="left:1896.39px;top:457.50px;font-size:45.00px;color:#111827;font-weight:700;transform:scaleX(1.0258);transform-origin:0 0;">159</div><div class="t" style="left:1982.70px;top:479.01px;font-size:19.60px;color:#4b5563;letter-spacing:0.370px;-webkit-text-stroke:0.35px #4b5563;">mg/dL</div><div class="abs" style="left:1899.20px;top:532.60px;width:7.00px;height:7.00px;background:#9ca3af;border-radius:50%"></div><div class="t" style="left:1912.65px;top:525.41px;font-size:20.30px;color:#374151;letter-spacing:-0.144px;-webkit-text-stroke:0.35px #374151;">11/29/2025</div><div class="abs" style="left:2213.87px;top:301.40px;width:316.20px;height:278.60px;background:#fff;border:1.5px solid #e4e6ea;border-radius:20px;box-shadow:0 1px 4px rgba(0,0,0,0.03)"></div><div class="abs" style="left:2243.87px;top:331.00px;width:64.50px;height:64.80px;background:linear-gradient(135deg,#ea7a3a,#da6329);border-radius:13px;box-shadow:0 3px 6px rgba(0,0,0,0.08)"></div><svg class="abs" style="left:2257.62px;top:344.90px;" width="37.00" height="37.00" viewBox="0 0 32 32" fill="none"><g transform="translate(9.1 4.05) rotate(-32.7)"><path d="M-2.6 1.2 Q-2.6 0 -1.4 0 H1.4 Q2.6 0 2.6 1.2 V11.5 Q2.6 12.6 1.8 13.6 L0.6 15.4 H-0.6 L-1.8 13.6 Q-2.6 12.6 -2.6 11.5 Z" stroke="#fff" stroke-width="1.3" stroke-linejoin="round"/><path d="M-2.6 2.8 H2.6" stroke="#fff" stroke-width="1.1"/><rect x="-1.05" y="4.6" width="2.1" height="6.4" rx="0.5" stroke="#fff" stroke-width="1.05"/><path d="M0 15.4 V24.6 M0 26.2 V28.4" stroke="#fff" stroke-width="1.7" stroke-linecap="round"/></g></svg><div class="t" style="left:2244.21px;top:420.05px;font-size:22.50px;color:#374151;-webkit-text-stroke:0.25px #374151;">Temp</div><div class="t" style="left:2243.28px;top:457.50px;font-size:45.00px;color:#111827;font-weight:700;transform:scaleX(0.8582);transform-origin:0 0;">37.1</div><div class="t" style="left:2328.67px;top:479.01px;font-size:19.60px;color:#4b5563;letter-spacing:-0.252px;-webkit-text-stroke:0.35px #4b5563;">Cel</div><div class="abs" style="left:2244.07px;top:532.60px;width:7.00px;height:7.00px;background:#9ca3af;border-radius:50%"></div><div class="t" style="left:2257.52px;top:525.41px;font-size:20.30px;color:#374151;letter-spacing:-0.278px;-webkit-text-stroke:0.35px #374151;">12/17/2025</div><div class="abs" style="left:144.65px;top:591.00px;width:766.40px;height:708.60px;background:#fff;border:1.5px solid #e4e6ea;border-radius:20px;box-shadow:0 1px 3px rgba(0,0,0,0.02)"></div><div class="abs" style="left:146.15px;top:699.60px;width:763.40px;height:1.60px;background:#e7e9ed"></div><div class="t" style="left:174.61px;top:618.99px;font-size:26.00px;color:#111827;font-weight:700;letter-spacing:-0.526px;">Blood Pressure</div><div class="t" style="left:174.63px;top:652.87px;font-size:22.60px;color:#374151;letter-spacing:0.471px;-webkit-text-stroke:0.3px #374151;">18 observations (mmHg)</div><svg class="abs" style="left:843.15px;top:627.30px;" width="24.00" height="24.00" viewBox="0 0 24 24" fill="none"><path d="M2.5 7.5 V2.5 H7.5 M2.5 2.5 L8.3 8.3 M21.5 7.5 V2.5 H16.5 M21.5 2.5 L15.7 8.3 M2.5 16.5 V21.5 H7.5 M2.5 21.5 L8.3 15.7 M21.5 16.5 V21.5 H16.5 M21.5 21.5 L15.7 15.7" stroke="#8b929e" stroke-width="2" stroke-linecap="round" stroke-linejoin="round"/></svg><svg class="abs" style="left:0;top:0" width="2554" height="1332" fill="none"><path d="M250.00 1206.80 H872.60" stroke="#e3e5ea" stroke-width="1.8" stroke-dasharray="5.4 5.4"/><path d="M250.00 1082.96 H872.60" stroke="#e3e5ea" stroke-width="1.8" stroke-dasharray="5.4 5.4"/><path d="M250.00 959.13 H872.60" stroke="#e3e5ea" stroke-width="1.8" stroke-dasharray="5.4 5.4"/><path d="M250.00 835.29 H872.60" stroke="#e3e5ea" stroke-width="1.8" stroke-dasharray="5.4 5.4"/><path d="M250.00 738.70 H872.60" stroke="#e3e5ea" stroke-width="1.8" stroke-dasharray="5.4 5.4"/><path d="M396.49 738.70 V1206.80" stroke="#e3e5ea" stroke-width="1.8" stroke-dasharray="5.4 5.4"/><path d="M542.99 738.70 V1206.80" stroke="#e3e5ea" stroke-width="1.8" stroke-dasharray="5.4 5.4"/><path d="M872.60 738.70 V1206.80" stroke="#e3e5ea" stroke-width="1.8" stroke-dasharray="5.4 5.4"/><path d="M250.00 738.70 V1206.80 H872.60" stroke="#6b7280" stroke-width="1.8"/><path d="M239.20 1206.80 H250.00" stroke="#6b7280" stroke-width="1.8"/><path d="M239.20 1082.96 H250.00" stroke="#6b7280" stroke-width="1.8"/><path d="M239.20 959.13 H250.00" stroke="#6b7280" stroke-width="1.8"/><path d="M239.20 835.29 H250.00" stroke="#6b7280" stroke-width="1.8"/><path d="M239.20 738.70 H250.00" stroke="#6b7280" stroke-width="1.8"/><path d="M250.00 1206.80 V1217.60" stroke="#6b7280" stroke-width="1.8"/><path d="M396.49 1206.80 V1217.60" stroke="#6b7280" stroke-width="1.8"/><path d="M542.99 1206.80 V1217.60" stroke="#6b7280" stroke-width="1.8"/><path d="M689.48 1206.80 V1217.60" stroke="#6b7280" stroke-width="1.8"/><path d="M872.60 1206.80 V1217.60" stroke="#6b7280" stroke-width="1.8"/><path d="M250.00,1006.80C262.21,983.59,274.42,960.37,286.62,960.37C323.25,960.37,359.87,1019.19,396.49,1019.19C420.91,1019.19,445.33,988.23,469.74,988.23C494.16,988.23,518.57,1019.19,542.99,1019.19C567.40,1019.19,591.82,997.52,616.24,997.52C628.44,997.52,640.65,1005.77,652.86,1009.90C665.07,1014.03,677.27,1022.28,689.48,1022.28C738.31,1022.28,787.15,777.71,835.98,777.71C848.18,777.71,860.39,777.71,872.60,777.71" stroke="#4a7ee7" stroke-width="3.6" fill="none"/><circle cx="250.00" cy="1006.80" r="6.6" fill="#fff" stroke="#4a7ee7" stroke-width="3.6"/><circle cx="286.62" cy="960.37" r="6.6" fill="#fff" stroke="#4a7ee7" stroke-width="3.6"/><circle cx="396.49" cy="1019.19" r="6.6" fill="#fff" stroke="#4a7ee7" stroke-width="3.6"/><circle cx="469.74" cy="988.23" r="6.6" fill="#fff" stroke="#4a7ee7" stroke-width="3.6"/><circle cx="542.99" cy="1019.19" r="6.6" fill="#fff" stroke="#4a7ee7" stroke-width="3.6"/><circle cx="616.24" cy="997.52" r="6.6" fill="#fff" stroke="#4a7ee7" stroke-width="3.6"/><circle cx="652.86" cy="1009.90" r="6.6" fill="#fff" stroke="#4a7ee7" stroke-width="3.6"/><circle cx="689.48" cy="1022.28" r="6.6" fill="#fff" stroke="#4a7ee7" stroke-width="3.6"/><circle cx="835.98" cy="777.71" r="6.6" fill="#fff" stroke="#4a7ee7" stroke-width="3.6"/><circle cx="872.60" cy="777.71" r="6.6" fill="#fff" stroke="#4a7ee7" stroke-width="3.6"/><path d="M323.25,1108.97C335.45,1101.23,347.66,1093.49,359.87,1093.49C384.29,1093.49,408.70,1143.02,433.12,1143.02C457.53,1143.02,481.95,1127.54,506.36,1127.54C530.78,1127.54,555.20,1167.79,579.61,1167.79C628.44,1167.79,677.27,1136.83,726.11,1136.83C738.31,1136.83,750.52,1136.83,762.73,1136.83C774.94,1136.83,787.15,1129.61,799.35,1121.35C811.56,1113.10,823.77,1087.30,835.98,1087.30C848.18,1087.30,860.39,1087.30,872.60,1087.30" stroke="#52b183" stroke-width="3.6" fill="none"/><circle cx="323.25" cy="1108.97" r="6.6" fill="#fff" stroke="#52b183" stroke-width="3.6"/><circle cx="359.87" cy="1093.49" r="6.6" fill="#fff" stroke="#52b183" stroke-width="3.6"/><circle cx="433.12" cy="1143.02" r="6.6" fill="#fff" stroke="#52b183" stroke-width="3.6"/><circle cx="506.36" cy="1127.54" r="6.6" fill="#fff" stroke="#52b183" stroke-width="3.6"/><circle cx="579.61" cy="1167.79" r="6.6" fill="#fff" stroke="#52b183" stroke-width="3.6"/><circle cx="726.11" cy="1136.83" r="6.6" fill="#fff" stroke="#52b183" stroke-width="3.6"/><circle cx="762.73" cy="1136.83" r="6.6" fill="#fff" stroke="#52b183" stroke-width="3.6"/><circle cx="799.35" cy="1121.35" r="6.6" fill="#fff" stroke="#52b183" stroke-width="3.6"/><circle cx="835.98" cy="1087.30" r="6.6" fill="#fff" stroke="#52b183" stroke-width="3.6"/><circle cx="872.60" cy="1087.30" r="6.6" fill="#fff" stroke="#52b183" stroke-width="3.6"/></svg><div class="t" style="left:192.53px;top:1196.64px;font-size:21.80px;color:#6b7280;letter-spacing:0.027px;">51.4</div><div class="t" style="left:192.38px;top:1072.81px;font-size:21.80px;color:#6b7280;letter-spacing:0.077px;">91.4</div><div class="t" style="left:181.74px;top:948.97px;font-size:21.80px;color:#6b7280;letter-spacing:-0.314px;">131.4</div><div class="t" style="left:183.74px;top:825.14px;font-size:21.80px;color:#6b7280;letter-spacing:-0.814px;">171.4</div><div class="t" style="left:177.30px;top:738.04px;font-size:21.80px;color:#6b7280;letter-spacing:0.875px;">202.6</div><div class="t" style="left:191.65px;top:1219.04px;font-size:21.80px;color:#6b7280;letter-spacing:0.840px;">02/10/2025</div><div class="t" style="left:342.25px;top:1219.04px;font-size:21.80px;color:#6b7280;letter-spacing:-0.049px;">01/11/2025</div><div class="t" style="left:487.10px;top:1219.04px;font-size:21.80px;color:#6b7280;letter-spacing:0.323px;">25/11/2025</div><div class="t" style="left:632.20px;top:1219.04px;font-size:21.80px;color:#6b7280;letter-spacing:0.656px;">22/12/2025</div><div class="t" style="left:761.40px;top:1219.04px;font-size:21.80px;color:#6b7280;letter-spacing:1.239px;">24/03/2026</div><div class="abs" style="left:953.65px;top:591.00px;width:766.40px;height:708.60px;background:#fff;border:1.5px solid #e4e6ea;border-radius:20px;box-shadow:0 1px 3px rgba(0,0,0,0.02)"></div><div class="abs" style="left:955.15px;top:699.60px;width:763.40px;height:1.60px;background:#e7e9ed"></div><div class="t" style="left:983.61px;top:618.99px;font-size:26.00px;color:#111827;font-weight:700;letter-spacing:0.109px;">Heart Rate</div><div class="t" style="left:983.63px;top:652.87px;font-size:22.60px;color:#374151;letter-spacing:0.504px;-webkit-text-stroke:0.3px #374151;">10 observations (bpm)</div><svg class="abs" style="left:1652.15px;top:627.30px;" width="24.00" height="24.00" viewBox="0 0 24 24" fill="none"><path d="M2.5 7.5 V2.5 H7.5 M2.5 2.5 L8.3 8.3 M21.5 7.5 V2.5 H16.5 M21.5 2.5 L15.7 8.3 M2.5 16.5 V21.5 H7.5 M2.5 21.5 L8.3 15.7 M21.5 16.5 V21.5 H16.5 M21.5 21.5 L15.7 15.7" stroke="#8b929e" stroke-width="2" stroke-linecap="round" stroke-linejoin="round"/></svg><svg class="abs" style="left:0;top:0" width="2554" height="1332" fill="none"><path d="M1060.00 1206.80 H1682.50" stroke="#e3e5ea" stroke-width="1.8" stroke-dasharray="5.4 5.4"/><path d="M1060.00 1039.62 H1682.50" stroke="#e3e5ea" stroke-width="1.8" stroke-dasharray="5.4 5.4"/><path d="M1060.00 872.44 H1682.50" stroke="#e3e5ea" stroke-width="1.8" stroke-dasharray="5.4 5.4"/><path d="M1060.00 738.70 H1682.50" stroke="#e3e5ea" stroke-width="1.8" stroke-dasharray="5.4 5.4"/><path d="M1267.50 738.70 V1206.80" stroke="#e3e5ea" stroke-width="1.8" stroke-dasharray="5.4 5.4"/><path d="M1682.50 738.70 V1206.80" stroke="#e3e5ea" stroke-width="1.8" stroke-dasharray="5.4 5.4"/><path d="M1060.00 738.70 V1206.80 H1682.50" stroke="#6b7280" stroke-width="1.8"/><path d="M1049.20 1206.80 H1060.00" stroke="#6b7280" stroke-width="1.8"/><path d="M1049.20 1039.62 H1060.00" stroke="#6b7280" stroke-width="1.8"/><path d="M1049.20 872.44 H1060.00" stroke="#6b7280" stroke-width="1.8"/><path d="M1049.20 738.70 H1060.00" stroke="#6b7280" stroke-width="1.8"/><path d="M1060.00 1206.80 V1217.60" stroke="#6b7280" stroke-width="1.8"/><path d="M1198.33 1206.80 V1217.60" stroke="#6b7280" stroke-width="1.8"/><path d="M1336.67 1206.80 V1217.60" stroke="#6b7280" stroke-width="1.8"/><path d="M1475.00 1206.80 V1217.60" stroke="#6b7280" stroke-width="1.8"/><path d="M1682.50 1206.80 V1217.60" stroke="#6b7280" stroke-width="1.8"/><path d="M1060.00,1145.50C1083.06,1145.50,1106.11,1145.50,1129.17,1145.50C1152.22,1145.50,1175.28,1167.79,1198.33,1167.79C1221.39,1167.79,1244.44,1080.49,1267.50,1022.90C1290.56,965.32,1313.61,822.29,1336.67,822.29C1359.72,822.29,1382.78,920.74,1405.83,956.03C1428.89,991.33,1451.94,1034.05,1475.00,1034.05C1498.06,1034.05,1521.11,777.71,1544.17,777.71C1567.22,777.71,1590.28,777.71,1613.33,777.71C1636.39,777.71,1659.44,777.71,1682.50,777.71" stroke="#4a7ee7" stroke-width="3.6" fill="none"/><circle cx="1060.00" cy="1145.50" r="6.6" fill="#fff" stroke="#4a7ee7" stroke-width="3.6"/><circle cx="1129.17" cy="1145.50" r="6.6" fill="#fff" stroke="#4a7ee7" stroke-width="3.6"/><circle cx="1198.33" cy="1167.79" r="6.6" fill="#fff" stroke="#4a7ee7" stroke-width="3.6"/><circle cx="1267.50" cy="1022.90" r="6.6" fill="#fff" stroke="#4a7ee7" stroke-width="3.6"/><circle cx="1336.67" cy="822.29" r="6.6" fill="#fff" stroke="#4a7ee7" stroke-width="3.6"/><circle cx="1405.83" cy="956.03" r="6.6" fill="#fff" stroke="#4a7ee7" stroke-width="3.6"/><circle cx="1475.00" cy="1034.05" r="6.6" fill="#fff" stroke="#4a7ee7" stroke-width="3.6"/><circle cx="1544.17" cy="777.71" r="6.6" fill="#fff" stroke="#4a7ee7" stroke-width="3.6"/><circle cx="1613.33" cy="777.71" r="6.6" fill="#fff" stroke="#4a7ee7" stroke-width="3.6"/><circle cx="1682.50" cy="777.71" r="6.6" fill="#fff" stroke="#4a7ee7" stroke-width="3.6"/></svg><div class="t" style="left:1002.29px;top:1196.64px;font-size:21.80px;color:#6b7280;letter-spacing:0.198px;">61.5</div><div class="t" style="left:1001.48px;top:1029.47px;font-size:21.80px;color:#6b7280;letter-spacing:0.468px;">76.5</div><div class="t" style="left:1002.38px;top:862.29px;font-size:21.80px;color:#6b7280;letter-spacing:0.169px;">91.5</div><div class="t" style="left:988.74px;top:738.04px;font-size:21.80px;color:#6b7280;letter-spacing:0.506px;">103.5</div><div class="t" style="left:1002.45px;top:1219.04px;font-size:21.80px;color:#6b7280;letter-spacing:0.685px;">09/10/2025</div><div class="t" style="left:1140.40px;top:1219.04px;font-size:21.80px;color:#6b7280;letter-spacing:0.723px;">22/10/2025</div><div class="t" style="left:1280.54px;top:1219.04px;font-size:21.80px;color:#6b7280;letter-spacing:0.197px;">15/11/2025</div><div class="t" style="left:1417.00px;top:1219.04px;font-size:21.80px;color:#6b7280;letter-spacing:0.712px;">28/12/2025</div><div class="t" style="left:1571.90px;top:1219.04px;font-size:21.80px;color:#6b7280;letter-spacing:1.172px;">24/03/2026</div><div class="abs" style="left:1763.75px;top:591.00px;width:766.40px;height:708.60px;background:#fff;border:1.5px solid #e4e6ea;border-radius:20px;box-shadow:0 1px 3px rgba(0,0,0,0.02)"></div><div class="abs" style="left:1765.25px;top:699.60px;width:763.40px;height:1.60px;background:#e7e9ed"></div><div class="t" style="left:1793.71px;top:618.99px;font-size:26.00px;color:#111827;font-weight:700;letter-spacing:-0.171px;">Body temperature</div><div class="t" style="left:1794.29px;top:652.87px;font-size:22.60px;color:#374151;letter-spacing:0.312px;-webkit-text-stroke:0.3px #374151;">7 observations (Cel)</div><svg class="abs" style="left:2462.25px;top:627.30px;" width="24.00" height="24.00" viewBox="0 0 24 24" fill="none"><path d="M2.5 7.5 V2.5 H7.5 M2.5 2.5 L8.3 8.3 M21.5 7.5 V2.5 H16.5 M21.5 2.5 L15.7 8.3 M2.5 16.5 V21.5 H7.5 M2.5 21.5 L8.3 15.7 M21.5 16.5 V21.5 H16.5 M21.5 21.5 L15.7 15.7" stroke="#8b929e" stroke-width="2" stroke-linecap="round" stroke-linejoin="round"/></svg><svg class="abs" style="left:0;top:0" width="2554" height="1332" fill="none"><path d="M1868.80 1206.80 H2491.70" stroke="#e3e5ea" stroke-width="1.8" stroke-dasharray="5.4 5.4"/><path d="M1868.80 1076.77 H2491.70" stroke="#e3e5ea" stroke-width="1.8" stroke-dasharray="5.4 5.4"/><path d="M1868.80 946.74 H2491.70" stroke="#e3e5ea" stroke-width="1.8" stroke-dasharray="5.4 5.4"/><path d="M1868.80 816.72 H2491.70" stroke="#e3e5ea" stroke-width="1.8" stroke-dasharray="5.4 5.4"/><path d="M1868.80 738.70 H2491.70" stroke="#e3e5ea" stroke-width="1.8" stroke-dasharray="5.4 5.4"/><path d="M2076.43 738.70 V1206.80" stroke="#e3e5ea" stroke-width="1.8" stroke-dasharray="5.4 5.4"/><path d="M2491.70 738.70 V1206.80" stroke="#e3e5ea" stroke-width="1.8" stroke-dasharray="5.4 5.4"/><path d="M1868.80 738.70 V1206.80 H2491.70" stroke="#6b7280" stroke-width="1.8"/><path d="M1858.00 1206.80 H1868.80" stroke="#6b7280" stroke-width="1.8"/><path d="M1858.00 1076.77 H1868.80" stroke="#6b7280" stroke-width="1.8"/><path d="M1858.00 946.74 H1868.80" stroke="#6b7280" stroke-width="1.8"/><path d="M1858.00 816.72 H1868.80" stroke="#6b7280" stroke-width="1.8"/><path d="M1858.00 738.70 H1868.80" stroke="#6b7280" stroke-width="1.8"/><path d="M1868.80 1206.80 V1217.60" stroke="#6b7280" stroke-width="1.8"/><path d="M2076.43 1206.80 V1217.60" stroke="#6b7280" stroke-width="1.8"/><path d="M2284.07 1206.80 V1217.60" stroke="#6b7280" stroke-width="1.8"/><path d="M2491.70 1206.80 V1217.60" stroke="#6b7280" stroke-width="1.8"/><path d="M1868.80,972.75C1903.41,875.23,1938.01,777.71,1972.62,777.71C2007.22,777.71,2041.83,918.57,2076.43,972.75C2111.04,1026.93,2145.64,1102.78,2180.25,1102.78C2214.86,1102.78,2249.46,810.22,2284.07,810.22C2318.67,810.22,2353.28,1167.79,2387.88,1167.79C2422.49,1167.79,2457.09,1037.76,2491.70,907.74" stroke="#4a7ee7" stroke-width="3.6" fill="none"/><circle cx="1868.80" cy="972.75" r="6.6" fill="#fff" stroke="#4a7ee7" stroke-width="3.6"/><circle cx="1972.62" cy="777.71" r="6.6" fill="#fff" stroke="#4a7ee7" stroke-width="3.6"/><circle cx="2076.43" cy="972.75" r="6.6" fill="#fff" stroke="#4a7ee7" stroke-width="3.6"/><circle cx="2180.25" cy="1102.78" r="6.6" fill="#fff" stroke="#4a7ee7" stroke-width="3.6"/><circle cx="2284.07" cy="810.22" r="6.6" fill="#fff" stroke="#4a7ee7" stroke-width="3.6"/><circle cx="2387.88" cy="1167.79" r="6.6" fill="#fff" stroke="#4a7ee7" stroke-width="3.6"/><circle cx="2491.70" cy="907.74" r="6.6" fill="#fff" stroke="#4a7ee7" stroke-width="3.6"/></svg><div class="t" style="left:1797.37px;top:1196.64px;font-size:21.80px;color:#6b7280;letter-spacing:0.556px;">36.18</div><div class="t" style="left:1794.37px;top:1066.62px;font-size:21.80px;color:#6b7280;letter-spacing:1.306px;">36.58</div><div class="t" style="left:1794.37px;top:936.59px;font-size:21.80px;color:#6b7280;letter-spacing:1.306px;">36.98</div><div class="t" style="left:1796.37px;top:806.56px;font-size:21.80px;color:#6b7280;letter-spacing:0.806px;">37.38</div><div class="t" style="left:1797.67px;top:738.04px;font-size:21.80px;color:#6b7280;letter-spacing:0.518px;">37.62</div><div class="t" style="left:1810.50px;top:1219.04px;font-size:21.80px;color:#6b7280;letter-spacing:0.812px;">20/10/2025</div><div class="t" style="left:2021.25px;top:1219.04px;font-size:21.80px;color:#6b7280;letter-spacing:0.151px;">07/11/2025</div><div class="t" style="left:2229.24px;top:1219.04px;font-size:21.80px;color:#6b7280;letter-spacing:-0.114px;">17/11/2025</div><div class="t" style="left:2386.64px;top:1219.04px;font-size:21.80px;color:#6b7280;letter-spacing:0.463px;">16/12/2025</div></body></html>
